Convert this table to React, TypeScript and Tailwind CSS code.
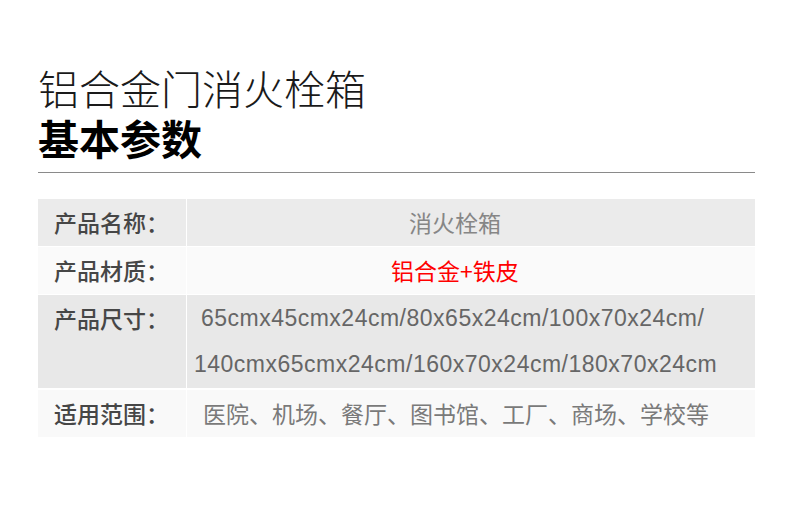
const cjk = "font-['Noto_Sans_CJK_SC',sans-serif]";

type Row = {
  label: string;
  bg: string;
  height: string;
  content: React.ReactNode;
};

const rows: Row[] = [
  {
    label: "产品名称：",
    bg: "bg-[#ebebeb]",
    height: "h-[47px]",
    content: (
      <div className="flex h-full items-center justify-center pr-8 text-[23px] text-[#868686]">
        消火栓箱
      </div>
    ),
  },
  {
    label: "产品材质：",
    bg: "bg-[#fafafa]",
    height: "h-[47px]",
    content: (
      <div className="flex h-full items-center justify-center pr-8 text-[23px] text-[#ff0000]">
        铝合金+铁皮
      </div>
    ),
  },
  {
    label: "产品尺寸：",
    bg: "bg-[#e8e8e8]",
    height: "h-[93px]",
    content: (
      // two fixed lines, the first one starts with a space like the source
      <div className="whitespace-pre pl-[7px] font-['Liberation_Sans',sans-serif] text-[23px] leading-[46px] tracking-[0.5px] text-[#666666]">
        <div> 65cmx45cmx24cm/80x65x24cm/100x70x24cm/</div>
        <div>140cmx65cmx24cm/160x70x24cm/180x70x24cm</div>
      </div>
    ),
  },
  {
    label: "适用范围：",
    bg: "bg-[#f9f9f9]",
    height: "h-[47px]",
    content: (
      <div className="flex h-full items-center pl-4 text-[23px] text-[#7a7a7a]">
        医院、机场、餐厅、图书馆、工厂、商场、学校等
      </div>
    ),
  },
];

export default function App() {
  return (
    <div className={`h-[525px] w-[790px] bg-white pl-[38px] pr-[35px] pt-[67px] ${cjk}`}>
      {/* Heading */}
      <h1 className="text-[41px] font-light leading-[41px] text-[#1a1a1a]">铝合金门消火栓箱</h1>
      <h2 className="mt-[9px] text-[41px] font-bold leading-[41px] text-black">基本参数</h2>
      <div className="mt-[14px] h-px bg-[#8a8a8a]"></div>

      {/* Spec table */}
      <div className="mt-[26px] flex flex-col">
        {rows.map((row, i) => (
          <div
            key={row.label}
            className={`flex ${row.height} ${row.bg} ${i === 3 ? "mt-[2px]" : i > 0 ? "mt-px" : ""}`}
          >
            <div
              className={`w-[149px] shrink-0 border-r border-white pl-4 text-[23px] font-medium text-[#464646] ${
                i === 2 ? "leading-[46px]" : "flex items-center"
              }`}
            >
              {row.label}
            </div>
            <div className="flex-1">{row.content}</div>
          </div>
        ))}
      </div>
    </div>
  );
}
